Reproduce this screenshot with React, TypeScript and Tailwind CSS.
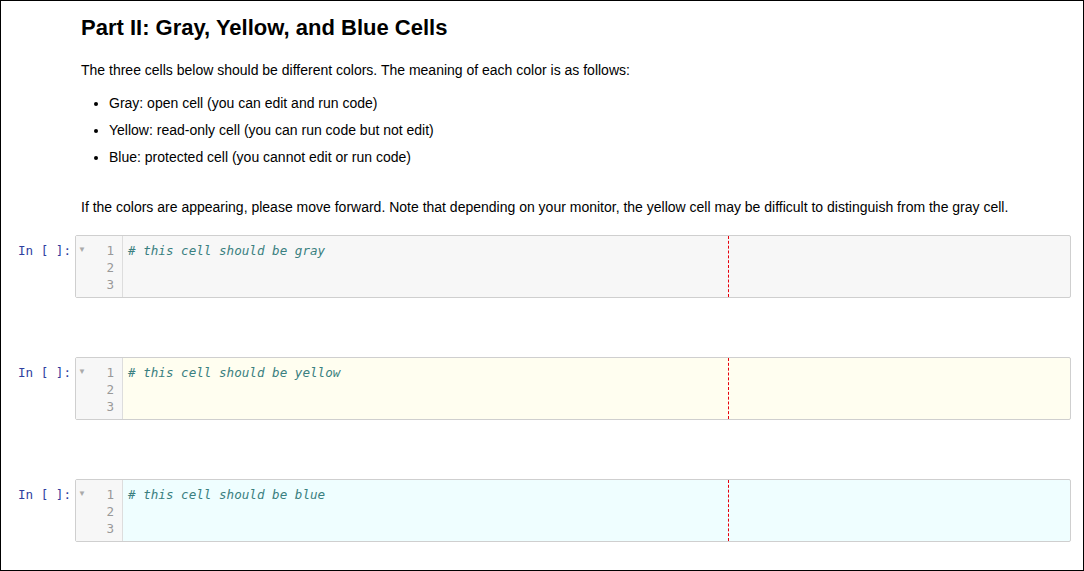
const mono = "font-['DejaVu_Sans_Mono','Liberation_Mono',monospace]";

function CodeCell({ text, bg }: { text: string; bg: string }) {
  return (
    <div className="flex items-start">
      <div className={`w-[74px] shrink-0 pt-[7px] pr-[4px] text-right text-[12.6px] leading-[17px] text-[#303f9f] ${mono}`}>
        In [&nbsp;]:
      </div>
      <div className={`flex h-[63px] w-[996px] border border-[#cfcfcf] rounded-[2px] ${bg}`}>
        <div className="relative w-[47px] shrink-0 border-r border-[#ddd] bg-[#f7f7f7] pt-[6px] pr-[8px]">
          <span className="absolute left-[2px] top-[8px] text-[8px] text-[#aaa]">▼</span>
          {[1, 2, 3].map((n) => (
            <div key={n} className={`text-right text-[12.6px] leading-[17px] text-[#999] ${mono}`}>
              {n}
            </div>
          ))}
        </div>
        <div className="relative flex-1 pt-[6px] pl-[5px]">
          <div className={`text-[12.6px] leading-[17px] italic text-[#3a8080] ${mono}`}>{text}</div>
          <div className="absolute top-0 bottom-0 left-[605px] border-l border-dashed border-l-red-600" />
        </div>
      </div>
    </div>
  );
}

export default function App() {
  return (
    <div className="w-[1084px] h-[571px] overflow-hidden border border-black bg-white font-['Liberation_Sans',Arial,sans-serif] text-black">
      <div className="pl-[80px] pt-[14px] text-[14px]">
        <h1 className="text-[22px] font-bold leading-[26px]">Part II: Gray, Yellow, and Blue Cells</h1>
        <p className="mt-[19px] leading-[20px]">
          The three cells below should be different colors. The meaning of each color is as follows:
        </p>
        <ul className="mt-[13px] list-disc pl-[28px] flex flex-col gap-[7px] leading-[20px]">
          <li>Gray: open cell (you can edit and run code)</li>
          <li>Yellow: read-only cell (you can run code but not edit)</li>
          <li>Blue: protected cell (you cannot edit or run code)</li>
        </ul>
        <p className="mt-[30px] leading-[20px]">
          If the colors are appearing, please move forward. Note that depending on your monitor, the yellow cell may be difficult to distinguish from the gray cell.
        </p>
      </div>
      <div className="mt-[18px] flex flex-col gap-[59px]">
        <CodeCell text="# this cell should be gray" bg="bg-[#f7f7f7]" />
        <CodeCell text="# this cell should be yellow" bg="bg-[#fffef0]" />
        <CodeCell text="# this cell should be blue" bg="bg-[#effeff]" />
      </div>
    </div>
  );
}
